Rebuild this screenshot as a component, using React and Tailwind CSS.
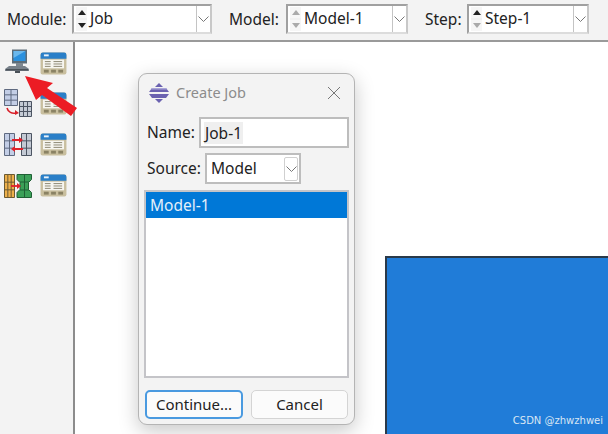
const font = { fontFamily: '"Noto Sans", "Noto Sans CJK SC", sans-serif' }

function Spinner({ upOn = true, downOn = true }) {
  return (
    <div className="flex flex-col w-[11px] h-[24px] ml-[2px] shrink-0 bg-[#f0f0f0] gap-[2px]">
      <div className="h-[11px] flex items-center justify-center bg-[#f6f6f6]">
        <svg width="8" height="5" viewBox="0 0 8 5"><path d="M4 0 8 5H0z" fill={upOn ? "#222" : "#aaa"} /></svg>
      </div>
      <div className="h-[11px] flex items-center justify-center bg-[#f6f6f6]">
        <svg width="8" height="5" viewBox="0 0 8 5"><path d="M0 0h8L4 5z" fill={downOn ? "#222" : "#aaa"} /></svg>
      </div>
    </div>
  )
}

function Chevron() {
  return (
    <svg width="11" height="6" viewBox="0 0 11 6" fill="none"><path d="M.5.5l5 5 5-5" stroke="#777" strokeWidth="1" /></svg>
  )
}

function Combo({ text, width, upOn, downOn }) {
  return (
    <div className={`${width} h-[30px] flex items-center bg-white border-2 border-[#a0a0a0] border-r-[#c8c8c8] border-b-[#dcdcdc] shrink-0`}>
      <Spinner upOn={upOn} downOn={downOn} />
      <span className="ml-[3px] flex-1 text-[15.5px] text-[#222]">{text}</span>
      <div className="w-[14px] h-full flex items-center justify-center bg-white border-l border-[#c4c4c4]">
        <Chevron />
      </div>
    </div>
  )
}

function TableIcon() {
  return (
    <svg width="27" height="23" viewBox="0 0 28 24">
      <rect x="0.5" y="0.5" width="27" height="23" rx="2" fill="#c9bf9f" />
      <path d="M0.5 7V3a2.5 2.5 0 0 1 2.5-2.5h22A2.5 2.5 0 0 1 27.5 3v4z" fill="#2a7fc8" />
      <rect x="4" y="2.5" width="5" height="2" fill="#e8f2fb" />
      <rect x="3" y="8" width="22" height="9" fill="#f7f6f0" />
      <path d="M5 10h6M5 12.5h6M5 15h6M14 10h9M14 12.5h9M14 15h9" stroke="#8a8570" strokeWidth="1" />
      <rect x="4" y="18.5" width="5" height="3" fill="#8a8264" />
      <rect x="11.5" y="18.5" width="5" height="3" fill="#8a8264" />
      <rect x="19" y="18.5" width="5" height="3" fill="#8a8264" />
    </svg>
  )
}

function ComputerIcon() {
  return (
    <svg width="24" height="24" viewBox="0 0 24 24">
      <rect x="7" y="0.5" width="15" height="14" fill="#5c6c78" />
      <rect x="8.500" y="2" width="12" height="10" fill="#2a90de" />
      <path d="M8.500 2h12L8.500 9z" fill="#6bb8ec" />
      <rect x="11" y="14" width="7" height="3" fill="#7d8790" />
      <path d="M4 17h16l4 3v2H0v-2z" fill="#78818a" />
      <rect x="1" y="20" width="22" height="1.500" fill="#4a5158" />
      <rect x="10" y="22" width="5" height="2" fill="#4a5158" />
    </svg>
  )
}

function MeshGrid({ x, y, cols, rows, w, h, fill, line }) {
  const v = Array.from({ length: cols + 1 }, (_, i) => x + (w * i) / cols)
  const hs = Array.from({ length: rows + 1 }, (_, i) => y + (h * i) / rows)
  return (
    <g>
      <rect x={x} y={y} width={w} height={h} fill={fill} />
      {v.map((p) => <line key={`v${p}`} x1={p} x2={p} y1={y} y2={y + h} stroke={line} strokeWidth="1" />)}
      {hs.map((p) => <line key={`h${p}`} x1={x} x2={x + w} y1={p} y2={p} stroke={line} strokeWidth="1" />)}
    </g>
  )
}

function MeshCopyIcon() {
  return (
    <svg width="28" height="28" viewBox="0 0 28 28">
      <MeshGrid x={0.5} y={0.5} cols={2} rows={3} w={13} h={16} fill="#c3cee6" line="#5f6a80" />
      <MeshGrid x={15.5} y={12.5} cols={3} rows={3} w={12} h={15} fill="#c4cad4" line="#4c5462" />
      <path d="M3 19c1 4 5 6 9 5" stroke="#d8202a" strokeWidth="1.6" fill="none" />
      <path d="M15 24l-4-3v5z" fill="#d8202a" />
    </svg>
  )
}

function MeshSwapIcon() {
  return (
    <svg width="28" height="23" viewBox="0 0 28 23">
      <MeshGrid x={0.5} y={0.5} cols={2} rows={3} w={10} h={22} fill="#c3cee6" line="#5f6a80" />
      <MeshGrid x={17.5} y={0.5} cols={2} rows={3} w={10} h={22} fill="#c4cad4" line="#4c5462" />
      <path d="M8 7h7M11 16h8" stroke="#e0202a" strokeWidth="1.8" />
      <path d="M19 7l-4-3v6zM7 16l4-3v6z" fill="#e0202a" />
    </svg>
  )
}

function MeshPartIcon() {
  return (
    <svg width="28" height="24" viewBox="0 0 28 24">
      <MeshGrid x={0.5} y={0.5} cols={3} rows={3} w={10} h={23} fill="#eeb04a" line="#6b5a32" />
      <path d="M13 .5h14.500v5l-3 3v7l3 3v5H13v-5l3-3v-7l-3-3z" fill="#3ba058" stroke="#1f6035" />
      <path d="M16 8h9M16 16h9M20.500 1v22" stroke="#1f6035" />
      <path d="M7 12h6" stroke="#e0202a" strokeWidth="1.8" />
      <path d="M17 12l-4-3v6z" fill="#e0202a" />
    </svg>
  )
}

export default function App() {
  return (
    <div className="relative w-[608px] h-[434px] overflow-hidden bg-[#f3f3f3] flex flex-col text-[#222]" style={font}>
      <div className="h-[42px] flex items-start pt-[4px] pl-[7px] border-b-2 border-[#9a9a9a] bg-[#f3f3f3] shrink-0">
        <span className="text-[15.5px] leading-[30px] w-[65px] whitespace-nowrap">Module:</span>
        <Combo text="Job" width="w-[140px]" />
        <span className="text-[15.5px] leading-[30px] ml-[17px] w-[57px] whitespace-nowrap">Model:</span>
        <Combo text="Model-1" width="w-[122px]" upOn={false} downOn={false} />
        <span className="text-[15.5px] leading-[30px] ml-[17px] w-[42px] whitespace-nowrap">Step:</span>
        <Combo text="Step-1" width="w-[122px]" downOn={false} />
      </div>

      <div className="flex flex-1 min-h-0">
        <div className="w-[75px] shrink-0 grid grid-cols-[36px_27px] auto-rows-[41px] pl-[4px] pt-[6px] border-r-2 border-[#8c8c8c]">
          <div className="pt-[1px] pl-[1px]"><ComputerIcon /></div>
          <div className="pt-[4px]"><TableIcon /></div>
          <div><MeshCopyIcon /></div>
          <div className="pt-[3px]"><TableIcon /></div>
          <div className="pt-[3px]"><MeshSwapIcon /></div>
          <div className="pt-[3px]"><TableIcon /></div>
          <div className="pt-[3px]"><MeshPartIcon /></div>
          <div className="pt-[3px]"><TableIcon /></div>
        </div>
        <div className="flex-1 bg-white" />
      </div>

      {/* part shown in the viewport */}
      <div className="absolute left-[385px] top-[256px] w-[223px] h-[178px] bg-[#207cd8] border-t-2 border-l-2 border-[#2a3a4a]" />
      <span className="absolute right-[5px] top-[414px] leading-[14px] text-[#d8e6f4]" style={{ fontFamily: '"DejaVu Sans", sans-serif', fontSize: 10 }}>CSDN @zhwzhwei</span>

      {/* red arrow over the toolbox */}
      <svg className="absolute left-[24px] top-[75px]" width="56" height="44" viewBox="0 0 56 44">
        <path d="M1 1 29 8 23 13 53 33 47 41 18 20 12 25z" fill="#ec1c24" />
      </svg>

      {/* Create Job dialog */}
      <div className="absolute left-[138px] top-[73px] w-[217px] h-[352px] flex flex-col bg-[#f3f3f3] rounded-[9px] border border-[#b4b4b4] shadow-[0_6px_20px_rgba(0,0,0,0.22)]">
        <div className="h-[43px] pb-[5px] flex items-center pl-[10px] pr-[13px] shrink-0">
          <svg width="20" height="20" viewBox="0 0 20 20">
            <path d="M10 0l4 4H6zM10 20l-4-4h8zM3 5h14l3 4H0zM0 11h20l-3 4H3z" fill="#6b62b0" />
            <path d="M3 5h14l1 1.500H2z" fill="#a9a4d8" />
          </svg>
          <span className="ml-[7px] flex-1 text-[14.5px] text-[#8c8c8c]">Create Job</span>
          <svg width="14" height="14" viewBox="0 0 14 14"><path d="M1 1l12 12M13 1 1 13" stroke="#777" strokeWidth="1" fill="none" /></svg>
        </div>
        <div className="flex-1 flex flex-col px-[5px]">
          <div className="flex items-center h-[31px] pl-[3px]">
            <span className="text-[15.5px] w-[52px]">Name:</span>
            <div className="flex-1 h-[31px] bg-white border-2 border-[#bdbdbd] flex items-center pl-[3px]">
              <span className="text-[15.5px] bg-[#efefef] px-[1px] leading-[22px]">Job-1</span>
            </div>
          </div>
          <div className="flex items-center h-[31px] mt-[5px] pl-[3px]">
            <span className="text-[15.5px] w-[58px] whitespace-nowrap">Source:</span>
            <div className="w-[96px] h-[31px] bg-white border-2 border-[#bdbdbd] flex items-center pl-[4px]">
              <span className="text-[15.5px] flex-1">Model</span>
              <div className="w-[14px] h-[24px] mr-[1px] flex items-center justify-center border border-[#d0d0d0] rounded-[2px]">
                <Chevron />
              </div>
            </div>
          </div>
          <div className="mt-[6px] h-[188px] bg-white border-2 border-[#c4c4c8] p-[0px] shrink-0">
            <div className="h-[26px] mt-[0px] bg-[#0078d7] pl-[4px] text-[15.5px] leading-[26px] text-[#e4effa]">Model-1</div>
          </div>
          <div className="flex gap-[8px] mt-[12px] ml-[1px]">
            <button className="w-[98px] h-[29px] rounded-[5px] bg-[#fbfbfb] border-2 border-[#4a9ae0] text-[15px] leading-none">Continue...</button>
            <button className="w-[97px] h-[29px] rounded-[5px] bg-[#fbfbfb] border border-[#d4d4d4] text-[15px] leading-none">Cancel</button>
          </div>
        </div>
      </div>
    </div>
  )
}
